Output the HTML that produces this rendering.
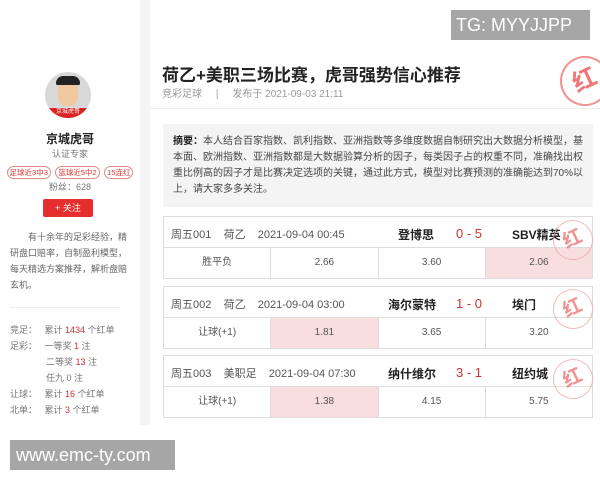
<!DOCTYPE html>
<html><head><meta charset="utf-8"><style>
*{margin:0;padding:0;box-sizing:border-box}
body{width:600px;height:480px;overflow:hidden;background:#fff;font-family:"Liberation Sans","Noto Sans CJK SC",sans-serif;position:relative;color:#333}
.abs{position:absolute}
.side{left:0;top:0;width:140px;height:425px;background:#fff}
.gap{left:140px;top:0;width:10px;height:425px;background:#f5f5f5}
.c{text-align:center;width:140px;left:0}
.tag{display:inline-block;border:1px solid #e08a8a;color:#d33;border-radius:7px;font-size:7.5px;padding:0 2px;line-height:11px}
.st{font-size:9px;color:#777;left:10px}
.st b{font-weight:normal;color:#c33}
.tbl{left:163px;width:430px;border:1px solid #ddd}
.hd{height:31px;border-bottom:1px solid #ddd;position:relative;font-size:11px;color:#555}
.hd span{position:absolute;top:9px}
.row{height:30px;display:flex}
.row div{flex:1;border-left:1px solid #ddd;text-align:center;line-height:30px;font-size:10px;color:#555}
.row div:first-child{border-left:none}
.pk{background:#f8dede}
.tm{font-weight:bold;color:#222;font-size:12px}
.sc{color:#c33;font-size:13px}
.stamp{width:40px;height:40px;border:1.5px solid #eaa;border-radius:50%;color:#e77;font-size:19px;text-align:center;line-height:37px;font-weight:bold;transform:rotate(-25deg);opacity:.8}
</style></head><body>
<div class="abs side"></div><div class="abs gap"></div>
<div class="abs" style="left:45px;top:72px;width:46px;height:46px;border-radius:50%;background:#d8d8d8;overflow:hidden">
<div class="abs" style="left:13px;top:8px;width:20px;height:26px;background:#f0c9a0;border-radius:8px"></div>
<div class="abs" style="left:11px;top:4px;width:24px;height:9px;background:#222;border-radius:8px 8px 2px 2px"></div>
<div class="abs" style="left:0;top:36px;width:46px;height:10px;background:#d22;font-size:6px;color:#fff;text-align:center;line-height:8px">京城虎哥</div></div>
<div class="abs c" style="top:130px;font-size:12px;font-weight:bold;color:#222">京城虎哥</div>
<div class="abs c" style="top:147px;font-size:9px;color:#777">认证专家</div>
<div class="abs c" style="top:162px;white-space:nowrap"><span class="tag">足球近3中3</span> <span class="tag">篮球近5中2</span> <span class="tag">15连红</span></div>
<div class="abs c" style="top:180px;font-size:9px;color:#777">粉丝：628</div>
<div class="abs" style="left:43px;top:199px;width:50px;height:18px;background:#e62e2e;border-radius:2px;color:#fff;font-size:9px;text-align:center;line-height:18px">+ 关注</div>
<div class="abs" style="left:10px;top:229px;width:120px;font-size:9px;color:#666;line-height:16px;text-indent:18px">有十余年的足彩经验，精研盘口赔率，自制盈利模型，每天精选方案推荐，解析盘赔玄机。</div>
<div class="abs" style="left:10px;top:307px;width:110px;height:1px;background:#eee"></div>
<div class="abs st" style="top:323px">竞足：&nbsp;&nbsp;&nbsp;累计 <b>1434</b> 个红单</div>
<div class="abs st" style="top:339px">足彩：&nbsp;&nbsp;&nbsp;一等奖 <b>1</b> 注</div>
<div class="abs st" style="top:355px;left:46px">二等奖 <b>13</b> 注</div>
<div class="abs st" style="top:371px;left:46px">任九 0 注</div>
<div class="abs st" style="top:387px">让球：&nbsp;&nbsp;&nbsp;累计 <b>16</b> 个红单</div>
<div class="abs st" style="top:403px">北单：&nbsp;&nbsp;&nbsp;累计 <b>3</b> 个红单</div>
<div class="abs" style="left:0;top:425px;width:600px;height:55px;background:#fff"></div>

<div class="abs" style="left:162px;top:61px;font-size:17px;font-weight:bold;color:#222">荷乙+美职三场比赛，虎哥强势信心推荐</div>
<div class="abs" style="left:162px;top:85px;font-size:10px;color:#999">竞彩足球 &nbsp;&nbsp;&nbsp;&nbsp;|&nbsp;&nbsp;&nbsp;&nbsp; 发布于 2021-09-03 21:11</div>
<div class="abs" style="left:150px;top:108px;width:450px;height:1px;background:#eee"></div>
<div class="abs stamp" style="left:560px;top:56px;width:50px;height:50px;line-height:46px;font-size:24px;border-width:2px;color:#e55;border-color:#e77">红</div>
<div class="abs" style="left:163px;top:124px;width:430px;height:83px;background:#f4f4f4;padding:10px 10px 0 10px;font-size:10px;line-height:16px;color:#444"><b style="color:#222">摘要：</b>本人结合百家指数、凯利指数、亚洲指数等多维度数据自制研究出大数据分析模型，基本面、欧洲指数、亚洲指数都是大数据验算分析的因子，每类因子占的权重不同，准确找出权重比例高的因子才是比赛决定选项的关键，通过此方式，模型对比赛预测的准确能达到70%以上，请大家多多关注。</div>

<div class="abs tbl" style="top:216px"><div class="hd"><span style="left:7px">周五001&nbsp;&nbsp;&nbsp; 荷乙&nbsp;&nbsp;&nbsp; 2021-09-04 00:45</span><span class="tm" style="left:234px">登博思</span><span class="sc" style="left:292px">0 - 5</span><span class="tm" style="left:348px">SBV精英</span></div>
<div class="row"><div>胜平负</div><div>2.66</div><div>3.60</div><div class="pk">2.06</div></div></div>
<div class="abs tbl" style="top:286px"><div class="hd"><span style="left:7px">周五002&nbsp;&nbsp;&nbsp; 荷乙&nbsp;&nbsp;&nbsp; 2021-09-04 03:00</span><span class="tm" style="left:224px">海尔蒙特</span><span class="sc" style="left:292px">1 - 0</span><span class="tm" style="left:348px">埃门</span></div>
<div class="row"><div>让球(+1)</div><div class="pk">1.81</div><div>3.65</div><div>3.20</div></div></div>
<div class="abs tbl" style="top:355px"><div class="hd"><span style="left:7px">周五003&nbsp;&nbsp;&nbsp; 美职足&nbsp;&nbsp;&nbsp; 2021-09-04 07:30</span><span class="tm" style="left:224px">纳什维尔</span><span class="sc" style="left:292px">3 - 1</span><span class="tm" style="left:348px">纽约城</span></div>
<div class="row"><div>让球(+1)</div><div class="pk">1.38</div><div>4.15</div><div>5.75</div></div></div>
<div class="abs stamp" style="left:553px;top:220px">红</div>
<div class="abs stamp" style="left:553px;top:289px">红</div>
<div class="abs stamp" style="left:553px;top:359px">红</div>

<div class="abs" style="left:451px;top:10px;width:139px;height:30px;background:#a6a6a6;color:#fff;font-size:18px;line-height:30px;padding-left:5px">TG: MYYJJPP</div>
<div class="abs" style="left:10px;top:440px;width:165px;height:30px;background:#a6a6a6;color:#fff;font-size:18px;line-height:30px;padding-left:6px">www.emc-ty.com</div>
</body></html>
